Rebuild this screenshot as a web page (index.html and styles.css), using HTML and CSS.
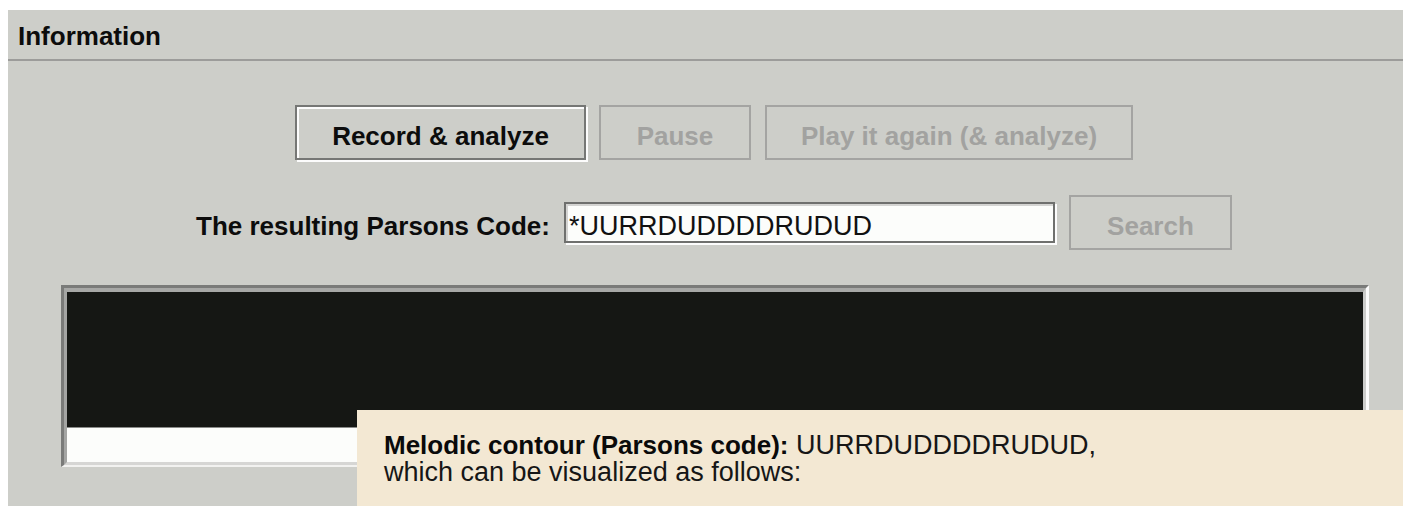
FILE: index.html
```html
<!DOCTYPE html>
<html lang="en">
<head>
<meta charset="utf-8">
<title>Information</title>
<link rel="stylesheet" href="styles.css">
</head>
<body>
<div class="info">
  <div class="info-title">Information</div>

  <div class="row controls">
    <button class="btn btn-record" type="button">Record &amp; analyze</button>
    <button class="btn btn-pause" type="button" disabled>Pause</button>
    <button class="btn btn-replay" type="button" disabled>Play it again (&amp; analyze)</button>
  </div>

  <div class="row code-row">
    <label class="code-label" for="parsons">The resulting Parsons Code:</label>
    <input class="code-field" id="parsons" type="text" value="*UURRDUDDDDRUDUD">
    <button class="btn btn-search" type="button" disabled>Search</button>
  </div>

  <div class="scope">
    <div class="scope-inner">
      <div class="scope-screen"></div>
      <div class="scope-strip"></div>
    </div>
  </div>

  <div class="tooltip">
    <div class="tip-line"><b>Melodic contour (Parsons code):</b> UURRDUDDDDRUDUD,</div>
    <div class="tip-line">which can be visualized as follows:</div>
  </div>
</div>
</body>
</html>
```

FILE: styles.css
```css
html, body {
  height: 100%;
}

body {
  margin: 10px 0 0 8px;
  background: #ffffff;
  overflow: hidden;
  font-family: "Liberation Sans", Arial, sans-serif;
  color: #111111;
}

.info {
  position: relative;
  height: 496px;
  background: #cdcec9;
  overflow: hidden;
}

.info-title {
  padding: 11px 10px 8px 10px;
  font-size: 26px;
  font-weight: bold;
  line-height: 30px;
  color: #0c0c0c;
  border-bottom: 2px solid #9c9c9a;
}

.row {
  display: flex;
  justify-content: center;
  padding-left: 17px;
}

.controls {
  margin-top: 44px;
  align-items: flex-start;
}

.code-row {
  margin-top: 35px;
  align-items: center;
}

.btn {
  box-sizing: border-box;
  height: 55px;
  padding: 7px 0 0;
  margin: 0;
  font-family: "Liberation Sans", Arial, sans-serif;
  font-size: 26px;
  font-weight: bold;
  line-height: 30px;
  background: #cdcec9;
  border-radius: 0;
  cursor: default;
}

.btn-record {
  width: 291px;
  color: #0c0c0c;
  border: 2px solid #767775;
  box-shadow: inset 2px 2px 0 #fcfcfc, 2px 2px 0 #fcfcfc;
}

.btn:disabled {
  color: #a2a2a0;
  border: 2px solid #a4a4a2;
}

.btn-pause {
  width: 152px;
  margin-left: 13px;
}

.btn-replay {
  width: 368px;
  margin-left: 14px;
}

.code-label {
  padding-top: 6px;
  font-size: 26px;
  font-weight: bold;
  line-height: 30px;
  color: #0c0c0c;
  white-space: nowrap;
}

.code-field {
  box-sizing: border-box;
  width: 491px;
  height: 41px;
  margin: 0 0 0 14px;
  padding: 7px 3px 0;
  font-family: "Liberation Sans", Arial, sans-serif;
  font-size: 27px;
  line-height: 30px;
  color: #111111;
  background: #fcfdfb;
  border: 2px solid #6f706e;
  border-radius: 0;
  box-shadow: inset 2px 2px 0 #d4d4d2, 2px 2px 0 #fcfcfc;
  outline: none;
}

.btn-search {
  width: 163px;
  margin-left: 14px;
}

.scope {
  margin: 35px 34px 0 53px;
  border-style: solid;
  border-width: 3px 3px 2px 3px;
  border-color: #7a7b79 #fbfbfb #f2f2f0 #7a7b79;
}

.scope-inner {
  border-style: solid;
  border-width: 4px 3px 3px 3px;
  border-color: #a7a8a6 #cbccca #d6d6d4 #a4a5a3;
}

.scope-screen {
  height: 135px;
  background: #151714;
  border-bottom: 1px solid #8a8b89;
}

.scope-strip {
  height: 34px;
  background: #fcfdfb;
}

.tooltip {
  position: absolute;
  left: 349px;
  top: 400px;
  right: 0;
  bottom: 0;
  box-sizing: border-box;
  padding: 22px 0 0 27px;
  background: #f3e8d3;
  font-size: 27px;
  line-height: 27px;
  color: #161616;
  white-space: nowrap;
}

.tip-line {
  height: 27px;
}

.tooltip b {
  font-size: 26px;
  color: #0a0a0a;
}
```
